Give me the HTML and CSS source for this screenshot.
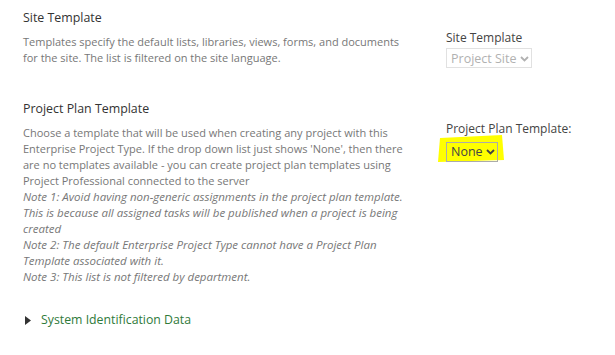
FILE: index.html
```html
<!DOCTYPE html>
<html lang="en">
<head>
    <meta charset="UTF-8">
    <title>Project Type Settings</title>
    <link rel="stylesheet" href="styles.css">
</head>
<body>
    <div class="section">
        <div class="section-left">
            <h3>Site Template</h3>
            <p class="desc">Templates specify the default lists, libraries, views, forms, and documents<br>for the site. The list is filtered on the site language.</p>
        </div>
        <div class="section-right">
            <label class="field-label">Site Template</label>
            <span class="fake-select disabled">Project Site
                <svg class="chevron" width="9" height="6" viewBox="0 0 9 6"><path d="M1 1 L4.5 4.5 L8 1" fill="none" stroke="currentColor" stroke-width="1.8"/></svg>
            </span>
        </div>
    </div>

    <div class="section second">
        <div class="section-left">
            <h3>Project Plan Template</h3>
            <p class="desc">Choose a template that will be used when creating any project with this<br>Enterprise Project Type. If the drop down list just shows 'None', then there<br>are no templates available - you can create project plan templates using<br>Project Professional connected to the server<br>
                <em>Note 1: Avoid having non-generic assignments in the project plan template.<br>This is because all assigned tasks will be published when a project is being<br>created</em><br>
                <em>Note 2: The default Enterprise Project Type cannot have a Project Plan<br>Template associated with it.</em><br>
                <em>Note 3: This list is not filtered by department.</em>
            </p>
        </div>
        <div class="section-right">
            <label class="field-label">Project Plan Template:</label>
            <span class="highlight-wrap">
                <svg class="highlight" width="70" height="28" viewBox="0 0 70 28"><polygon points="4,3 66,0 68,25 2,27" fill="#ffff00"/></svg>
                <span class="fake-select">None
                    <svg class="chevron" width="9" height="6" viewBox="0 0 9 6"><path d="M1 1 L4.5 4.5 L8 1" fill="none" stroke="currentColor" stroke-width="1.8"/></svg>
                </span>
            </span>
        </div>
    </div>

    <div class="expander">
        <svg class="arrow" width="6" height="9" viewBox="0 0 6 9"><polygon points="0,0 6,4.5 0,9" fill="#333"/></svg>
        <span class="expander-link">System Identification Data</span>
    </div>
</body>
</html>
```

FILE: styles.css
```css
body {
    margin: 0;
    padding: 8px 0 0 23px;
    font-family: "Open Sans", "Noto Sans", sans-serif;
    background: #fff;
    color: #444;
}
.section {
    display: flex;
}
.section.second {
    margin-top: 31px;
}
.section-left {
    width: 400px;
}
.section-right {
    margin-left: 23px;
    padding-top: 22px;
    display: flex;
    flex-direction: column;
    align-items: flex-start;
}
h3 {
    margin: 0;
    font-size: 12.4px;
    font-weight: normal;
    line-height: 20px;
    color: #333;
}
.desc {
    margin: 6px 0 0 0;
    font-size: 11px;
    line-height: 16px;
    color: #777;
    white-space: nowrap;
}
.desc em {
    font-style: italic;
    font-size: 11.5px;
}
.field-label {
    font-size: 12px;
    line-height: 16px;
    color: #444;
}
.fake-select {
    display: inline-flex;
    align-items: center;
    gap: 3px;
    height: 18px;
    margin-top: 2px;
    padding: 0 2px 0 4px;
    border: 1px solid #ababab;
    font-size: 12.5px;
    color: #444;
    position: relative;
}
.fake-select.disabled {
    border-color: #e1e1e1;
    color: #b1b1b1;
}
.chevron {
    margin-top: 1px;
}
.highlight-wrap {
    position: relative;
    display: inline-block;
    margin-top: 2px;
}
.highlight-wrap .fake-select {
    margin-top: 0;
}
.highlight {
    position: absolute;
    left: -10px;
    top: -4px;
}
.expander {
    display: flex;
    align-items: center;
    margin-top: 26px;
    padding-left: 2px;
}
.arrow {
    margin-right: 10px;
}
.expander-link {
    font-size: 12.3px;
    line-height: 18px;
    color: #2f7a3a;
}
```
